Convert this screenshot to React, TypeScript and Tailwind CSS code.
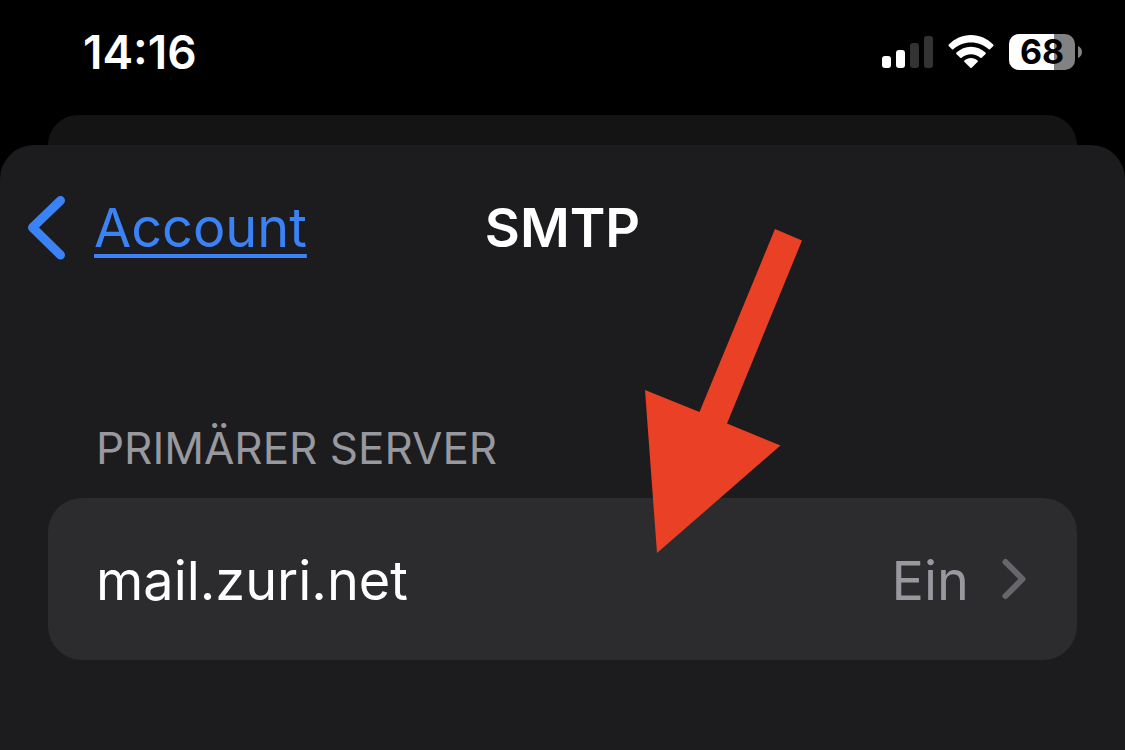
const SignalIcon = () => (
  <svg width="51" height="34" viewBox="0 0 51 34" aria-hidden="true">
    <rect x="0" y="21" width="9" height="12" rx="3" fill="#fff" />
    <rect x="14" y="15" width="9" height="18" rx="3" fill="#fff" />
    <rect x="28" y="8" width="9" height="25" rx="3" fill="#333" />
    <rect x="42" y="1" width="9" height="32" rx="3" fill="#333" />
  </svg>
);

const WifiIcon = () => (
  <svg width="46" height="34" viewBox="0 0 46 34" fill="#fff" aria-hidden="true">
    <path d="M23 7.400C29.800 7.400 36 10 40.700 14.200Q41.400 14.800 42 14.200L45.300 11Q45.900 10.300 45.200 9.600C39.400 3.600 31.600 0 23 0S6.600 3.600.8 9.600Q.1 10.300.7 11L4 14.200Q4.600 14.800 5.300 14.200C10 10 16.200 7.400 23 7.400Z" />
    <path d="M23 19.200C26.600 19.200 29.800 20.500 32.400 22.700Q33.100 23.300 33.700 22.700L37.600 18.900Q38.200 18.200 37.500 17.600C33.500 13.900 28.600 11.700 23 11.700S12.500 13.900 8.500 17.600Q7.800 18.200 8.400 18.900L12.300 22.700Q12.900 23.300 13.600 22.700C16.200 20.500 19.400 19.200 23 19.200Z" />
    <path d="M29.700 26.800Q30.300 26.100 29.600 25.500C27.800 23.800 25.600 22.900 23 22.900S18.200 23.800 16.400 25.500Q15.700 26.100 16.300 26.800L22.300 32.700Q23 33.400 23.700 32.700Z" />
  </svg>
);

const Battery = ({ level }: { level: number }) => (
  <div className="flex items-center gap-[3px]">
    <div className="relative flex h-9 w-[66px] items-center justify-center rounded-[10px] bg-[#828282]">
      <div className="absolute inset-y-0 left-0 rounded-l-[10px] bg-white" style={{ width: `${level}%` }} />
      <span className="relative text-[34px] leading-9 font-bold text-black">{level}</span>
    </div>
    <svg width="4" height="12" viewBox="0 0 4 12" fill="#828282" aria-hidden="true">
      <path d="M0 0C2.400 1 4 3.300 4 6S2.400 11 0 12Z" />
    </svg>
  </div>
);

const StatusBar = () => (
  <div className="flex h-[115px] items-start justify-between pt-6 pr-[43px] pl-[83px]">
    <span className="text-[46px] leading-14 font-semibold">14:16</span>
    <div className="flex h-14 items-center gap-[15px]">
      <SignalIcon />
      <WifiIcon />
      <Battery level={68} />
    </div>
  </div>
);

const Arrow = () => (
  <svg
    className="pointer-events-none absolute top-[84px] left-[645px]"
    width="158"
    height="325"
    viewBox="0 0 158 325"
    aria-hidden="true"
  >
    <path d="M130 0L157 11.500L82 194.500L135.500 216.500L12 324L0 161L54.500 183Z" fill="#ea4025" />
  </svg>
);

const App = () => {
  return (
    <div className="flex min-h-screen w-full flex-col bg-black font-['Inter',sans-serif] text-white">
      <StatusBar />

      {/* Edge of the sheet underneath */}
      <div className="mx-12 h-[30px] rounded-t-[30px] bg-[#141414]" />

      <main className="relative flex-1 rounded-t-[34px] bg-[#1c1c1e]">
        <header className="grid grid-cols-[1fr_auto_1fr] items-center px-7 pt-[47px]">
          <a
            href="#account"
            className="flex items-center gap-[29px] text-[54px] leading-18 text-[#3b82f6] underline decoration-4 underline-offset-[7px]"
          >
            <svg width="37" height="64" viewBox="0 0 37 64" fill="none" aria-hidden="true">
              <path
                d="M32.500 4.500L4.500 31.500L32.500 59"
                stroke="currentColor"
                strokeWidth="9"
                strokeLinecap="round"
                strokeLinejoin="round"
              />
            </svg>
            Account
          </a>
          <h1 className="text-[54px] leading-18 font-semibold">SMTP</h1>
        </header>

        <section className="px-12 pt-[156px] pb-12">
          <h2 className="px-12 text-[44px] leading-14 text-[#98989f] uppercase">Primärer Server</h2>
          <button
            type="button"
            className="mt-[22px] flex w-full items-center rounded-[34px] bg-[#2c2c2e] px-12 pt-[47px] pb-[43px] text-left text-[54px] leading-18"
          >
            <span className="flex-1">mail.zuri.net</span>
            <span className="text-[#98989f]">Ein</span>
            <svg className="ml-8" width="28" height="46" viewBox="0 0 28 46" fill="none" aria-hidden="true">
              <path
                d="M4.500 4L21.500 21L4.500 38"
                stroke="#66666b"
                strokeWidth="6"
                strokeLinecap="round"
                strokeLinejoin="round"
              />
            </svg>
          </button>
        </section>

        <Arrow />
      </main>
    </div>
  );
};

export default App;
